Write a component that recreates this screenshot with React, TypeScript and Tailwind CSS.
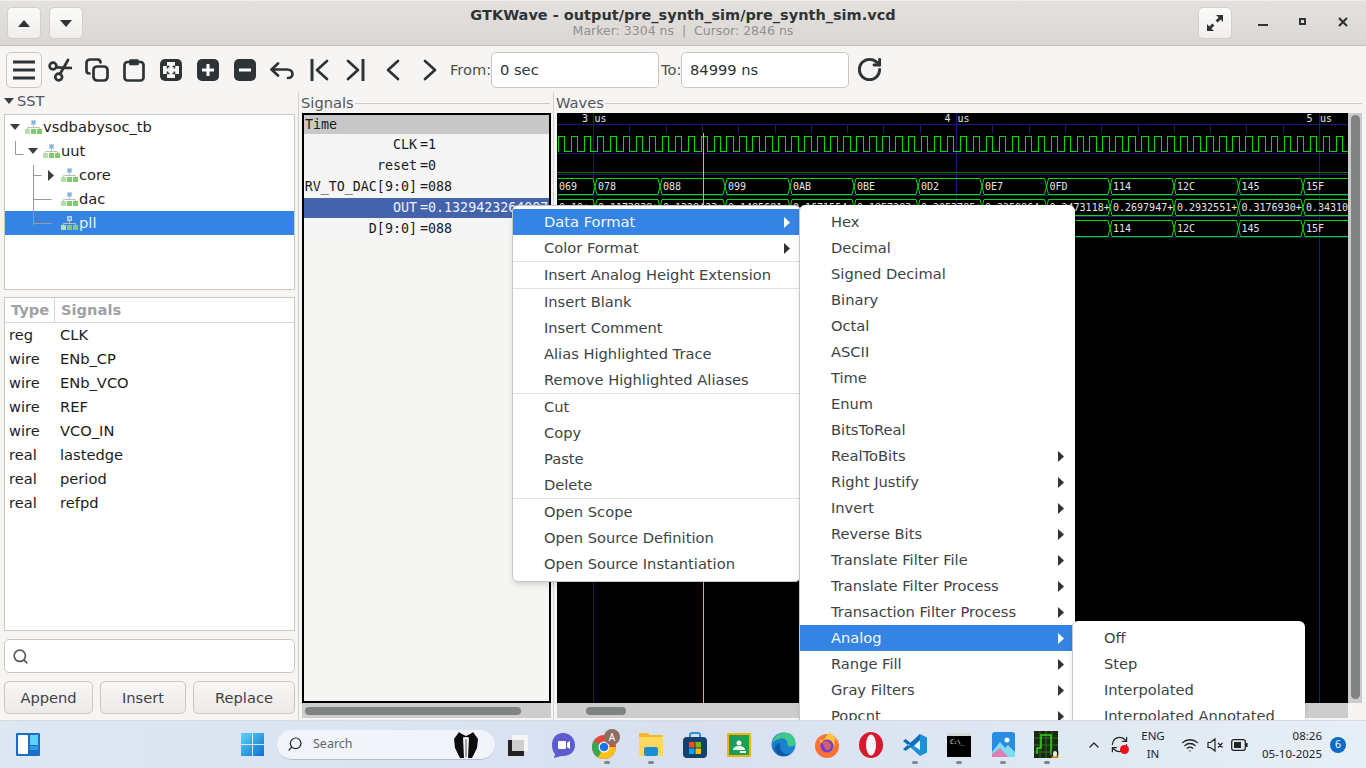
import React from "react";
import { Search, RotateCw, ChevronUp, Wifi, RefreshCw } from "lucide-react";

const ink = "#2e3436";

function Ico({ children, w = 24, h = 24, vb = "0 0 24 24" }: { children: React.ReactNode; w?: number; h?: number; vb?: string }) {
  return (
    <svg width={w} height={h} viewBox={vb} fill="none" stroke={ink} strokeWidth={2.7} strokeLinecap="round" strokeLinejoin="round">
      {children}
    </svg>
  );
}

function Hier() {
  return (
    <svg width="17" height="14" viewBox="0 0 17 14" className="shrink-0">
      <rect x="6" y="0" width="5" height="5" fill="#bcd3f0" />
      <rect x="7" y="1" width="3" height="3" fill="#86b0e2" />
      <path d="M8.5 5v3M2.5 9V7.500h12V9" stroke="#bdbdbd" fill="none" />
      <rect x="0" y="9" width="5" height="5" fill="#b5dfab" />
      <rect x="6" y="9" width="5" height="5" fill="#80cb72" />
      <rect x="12" y="9" width="5" height="5" fill="#80cb72" />
    </svg>
  );
}

function TriDown({ c = "#3a3f41", s = 5 }: { c?: string; s?: number }) {
  return <svg width={s * 2} height={s + 1} viewBox="0 0 10 6"><path d="M0 0h10L5 6z" fill={c} /></svg>;
}
function TriRight({ c = ink }: { c?: string }) {
  return <svg width="6" height="11" viewBox="0 0 6 11"><path d="M0 0l6 5.500L0 11z" fill={c} /></svg>;
}

function ToolBtn({ children }: { children: React.ReactNode }) {
  return <div className="w-[37px] h-[36px] flex items-center justify-center shrink-0">{children}</div>;
}

function Toolbar() {
  return (
    <div className="h-[46px] pt-[1px] bg-[#f6f5f4] flex items-center pl-[6px] text-[14.67px]">
      <div className="w-[36px] h-[36px] rounded-[5px] border border-[#cdc7c2] bg-[#f8f7f6] flex items-center justify-center shrink-0 -mr-[1px]">
        <svg width="24" height="20" viewBox="0 0 24 20" stroke={ink} strokeWidth={3}><path d="M1 2h22M1 10h22M1 18h22" /></svg>
      </div>
      <ToolBtn>
        <Ico><circle cx="5" cy="8" r="3.400" /><circle cx="10.700" cy="19" r="3.400" /><path d="M8.300 9.300l15 .7M12 16l8-14" /></Ico>
      </ToolBtn>
      <ToolBtn>
        <Ico><rect x="8.500" y="8.500" width="14" height="14" rx="3.500" /><path d="M4.500 15.500C2.500 15.500 1.500 14 1.500 12.500V5C1.500 3 3 1.500 5 1.500h7.500c1.500 0 3 1 3 3" /></Ico>
      </ToolBtn>
      <ToolBtn>
        <Ico><rect x="2.500" y="4" width="19" height="18.500" rx="3" /><path d="M8.500 2.500h7V6h-7z" fill={ink} /></Ico>
      </ToolBtn>
      <ToolBtn>
        <svg width="22" height="22" viewBox="0 0 22 22">
          <rect width="22" height="22" rx="5" fill={ink} />
          <path d="M7 3h8v4h4v8h-4v4H7v-4H3V7h4z" fill="#f6f5f4" />
          <path d="M7.500 9.500v-2h2M12.500 7.500h2v2M14.500 12.500v2h-2M9.500 14.500h-2v-2" stroke={ink} strokeWidth="1.500" fill="none" />
        </svg>
      </ToolBtn>
      <ToolBtn>
        <svg width="22" height="22" viewBox="0 0 22 22"><rect width="22" height="22" rx="5" fill={ink} /><path d="M11 5v12M5 11h12" stroke="#fff" strokeWidth={3} /></svg>
      </ToolBtn>
      <ToolBtn>
        <svg width="22" height="22" viewBox="0 0 22 22"><rect width="22" height="22" rx="5" fill={ink} /><path d="M5 11h12" stroke="#fff" strokeWidth={3} /></svg>
      </ToolBtn>
      <ToolBtn>
        <Ico><path d="M8 5.500L1.500 11.500 8 17.500M1.500 11.500H17c3.500 0 5.500 2 5.500 4.500s-2 4-4.500 4" /></Ico>
      </ToolBtn>
      <ToolBtn>
        <Ico><path d="M5 1v22" strokeLinecap="butt" strokeWidth={3} /><path d="M20 3L10 12l10 9" /></Ico>
      </ToolBtn>
      <ToolBtn>
        <Ico><path d="M19 1v22" strokeLinecap="butt" strokeWidth={3} /><path d="M4 3l10 9-10 9" /></Ico>
      </ToolBtn>
      <ToolBtn>
        <Ico><path d="M17 3l-10 9 10 9" /></Ico>
      </ToolBtn>
      <ToolBtn>
        <Ico><path d="M7 3l10 9-10 9" /></Ico>
      </ToolBtn>
      <span className="ml-[2px] text-[#4a4f50] w-[41px] shrink-0">From:</span>
      <div className="w-[168px] h-[36px] rounded-[5px] border border-[#cdc7c2] bg-white flex items-center pl-[8px] text-[#2e3436] shrink-0">0 sec</div>
      <span className="ml-[2px] text-[#4a4f50] w-[20px] shrink-0">To:</span>
      <div className="w-[168px] h-[36px] rounded-[5px] border border-[#cdc7c2] bg-white flex items-center pl-[8px] text-[#2e3436] shrink-0">84999 ns</div>
      <div className="ml-[7px]"><RotateCw size={27} color={ink} strokeWidth={2.6} /></div>
    </div>
  );
}

function TitleBar() {
  const btn = "w-[34px] h-[32px] rounded-[5px] border border-[#d3cfca] bg-gradient-to-b from-[#fafaf9] to-[#f1efed] flex items-center justify-center shrink-0";
  return (
    <div className="h-[46px] shrink-0 grid grid-cols-[1fr_auto_1fr] items-center bg-gradient-to-b from-[#e3e0dd] to-[#dbd8d4] border-b border-[#c3bfba] border-t border-t-[#f2f0ee]">
      <div className="flex items-center pl-[7px] gap-[8px]">
        <div className={btn}><svg width="12" height="7" viewBox="0 0 12 7"><path d="M6 0l6 7H0z" fill={ink} /></svg></div>
        <div className={btn}><svg width="12" height="7" viewBox="0 0 12 7"><path d="M0 0h12L6 7z" fill={ink} /></svg></div>
      </div>
      <div className="flex flex-col items-center leading-[16px]">
        <span className="font-bold text-[14.5px] text-[#2e3436]">GTKWave - output/pre_synth_sim/pre_synth_sim.vcd</span>
        <span className="text-[12.5px] text-[#8f9192] whitespace-pre">Marker: 3304 ns  |  Cursor: 2846 ns</span>
      </div>
      <div className="flex items-center justify-end">
        <div className={`${btn} mr-[26px]`}>
          <svg width="18" height="18" viewBox="0 0 18 18" fill={ink}>
            <path d="M10 1h7v7l-2.400-2.400-3 3-2-2 3-3zM1 10l2.400 2.400 3-3 2 2-3 3L8 17H1z" />
          </svg>
        </div>
        <div className="w-[10px] h-[2.5px] bg-[#2e3436] mt-[4px] mr-[31px]" />
        <div className="w-[7px] h-[7px] border-2 border-[#2e3436] -mt-[3px] mr-[32px]" />
        <svg width="10" height="10" viewBox="0 0 10 10" className="mr-[18px] -mt-[3px]"><path d="M1 1l8 8M9 1l-8 8" stroke={ink} strokeWidth={2.2} /></svg>
      </div>
    </div>
  );
}

function TreeRow({ pad, name, sel, tri }: { pad: number; name: string; sel?: boolean; tri?: "down" | "right" }) {
  return (
    <div className={`h-[24px] flex items-center ${sel ? "bg-[#3584e4] text-[#e8f0fb]" : "text-[#1c1c1c]"}`} style={{ paddingLeft: pad }}>
      <span className="w-[20px] shrink-0 flex justify-center">
        {tri === "down" && <TriDown />}
        {tri === "right" && <TriRight c="#3a3f41" />}
      </span>
      <Hier />
      <span className="ml-[1px]">{name}</span>
    </div>
  );
}

function LeftPane() {
  const sigs: [string, string][] = [["reg", "CLK"], ["wire", "ENb_CP"], ["wire", "ENb_VCO"], ["wire", "REF"], ["wire", "VCO_IN"], ["real", "lastedge"], ["real", "period"], ["real", "refpd"]];
  return (
    <div className="w-[298px] shrink-0 pl-[4px] pr-[3px] flex flex-col text-[14.67px]">
      <div className="h-[22px] flex items-center pb-[4px] text-[#50565a]">
        <TriDown c="#3a3f41" />
        <span className="ml-[3px]">SST</span>
      </div>
      <div className="h-[176px] border border-[#cdc7c2] bg-white relative shrink-0">
        <svg className="absolute left-0 top-0" width="60" height="120" stroke="#9a9a9a" fill="none">
          <path d="M10.500 26v13.500h8M28.500 50v60M28.500 60.500h8M28.500 84.500h18M28.500 108.500h18" />
        </svg>
        <TreeRow pad={0} name="vsdbabysoc_tb" tri="down" />
        <TreeRow pad={18} name="uut" tri="down" />
        <TreeRow pad={36} name="core" tri="right" />
        <TreeRow pad={36} name="dac" />
        <TreeRow pad={36} name="pll" sel />
      </div>
      <div className="mt-[7px] h-[334px] border border-[#cdc7c2] bg-white shrink-0">
        <div className="h-[25px] flex items-center font-bold text-[#a0a2a3] border-b border-[#d9d7d4]">
          <span className="w-[50px] pl-[6px] border-r border-[#d9d7d4] h-full flex items-center">Type</span>
          <span className="pl-[6px]">Signals</span>
        </div>
        {sigs.map(([t, n]) => (
          <div key={n} className="h-[24px] flex items-center text-[#1c1c1c]">
            <span className="w-[55px] pl-[4px]">{t}</span>
            <span>{n}</span>
          </div>
        ))}
      </div>
      <div className="mt-[8px] h-[34px] rounded-[5px] border border-[#cdc7c2] bg-white flex items-center pl-[7px] shrink-0">
        <Search size={17} color="#555b5d" strokeWidth={2.4} />
      </div>
      <div className="mt-[8px] h-[33px] flex gap-[7px] text-[#3d4345] shrink-0">
        <div className="w-[89px] rounded-[5px] border border-[#cdc7c2] bg-gradient-to-b from-[#f8f7f6] to-[#ece9e6] flex items-center justify-center">Append</div>
        <div className="w-[86px] rounded-[5px] border border-[#cdc7c2] bg-gradient-to-b from-[#f8f7f6] to-[#ece9e6] flex items-center justify-center">Insert</div>
        <div className="flex-1 rounded-[5px] border border-[#cdc7c2] bg-gradient-to-b from-[#f8f7f6] to-[#ece9e6] flex items-center justify-center">Replace</div>
      </div>
    </div>
  );
}

function SigRow({ name, val, sel }: { name: string; val: string; sel?: boolean }) {
  return (
    <div className={`h-[20px] mb-[1px] shrink-0 flex items-center whitespace-pre overflow-hidden ${sel ? "bg-[#4463ac] text-[#eef1f8]" : "bg-[#f5f5f5] text-[#1a1a1a]"}`}>
      <span className="w-[113px] text-right shrink-0">{name}</span>
      <span className="ml-[3px]">{val}</span>
    </div>
  );
}

function SignalsPane() {
  return (
    <div className="w-[255px] shrink-0 flex flex-col border-l border-[#d5d2ce]">
      <div className="h-[21px] flex items-center pl-[2px] text-[14.67px] text-[#50565a]">
        <span>Signals</span>
        <div className="flex-1 h-[1px] bg-[#cdc9c5] ml-[1px] mr-[3px] mt-[2px]" />
      </div>
      <div className="ml-[3px] w-[249px] h-[590px] border-2 border-black bg-[#f5f5f4] flex flex-col font-['DejaVu_Sans_Mono',monospace] text-[13.33px] shrink-0 overflow-hidden">
        <div className="h-[19px] mb-[1px] pt-[1px] bg-[#c8c8c8] text-[#1a1a1a] flex items-center pl-[1px] shrink-0">Time</div>
        <SigRow name="CLK" val="=1" />
        <SigRow name="reset" val="=0" />
        <SigRow name="RV_TO_DAC[9:0]" val="=088" />
        <SigRow name="OUT" val="=0.1329423264007" sel />
        <SigRow name="D[9:0]" val="=088" />
      </div>
      <div className="ml-[3px] w-[249px] h-[15px] bg-[#cdcdcd] flex items-center pl-[3px]">
        <div className="w-[216px] h-[8px] rounded-full bg-[#7f8382]" />
      </div>
    </div>
  );
}

function WaveSvg() {
  const P = 363 / 28;
  let clk = "M558 151.500";
  for (let x = 558.4; x < 1348; x += P) {
    clk += `V136.500H${(x + P / 2).toFixed(1)}V151.500H${(x + P).toFixed(1)}`;
  }
  const ticks: number[] = [];
  for (let k = 0; k < 22; k++) ticks.push(593 + 36.3 * k);
  const xs = [559, 595, 660, 725, 790, 854, 918, 982, 1046.5, 1110, 1174, 1238.5, 1303, 1352];
  const hex = ["069", "078", "088", "099", "0AB", "0BE", "0D2", "0E7", "0FD", "114", "12C", "145", "15F"];
  const out = ["0.10+", "0.1173838+", "0.1328423+", "0.1485681+", "0.1671554+", "0.1857283+", "0.2053785+", "0.2250864+", "0.2473118+", "0.2697947+", "0.2932551+", "0.3176930+", "0.34310"];
  const green = "#00dd00";
  const blue = "#1c1c72";
  const bus = (top: number, bot: number, labels: string[], base: number, minText: number) =>
    labels.map((t, i) => {
      const a = xs[i];
      const b = xs[i + 1];
      const mid = (top + bot) / 2;
      const d = i === 0
        ? `M${a - 1} ${top}H${b - 2}L${b} ${mid}L${b - 2} ${bot}H${a - 1}`
        : `M${a} ${mid}L${a + 2} ${top}H${b - 2}L${b} ${mid}L${b - 2} ${bot}H${a + 2}Z`;
      return (
        <g key={t + base + i}>
          <path d={d} fill="none" stroke={green} strokeWidth={1} />
          {a >= minText && (
            <text x={i === 0 ? a : a + 3} y={base} fontSize="10" fill="#e4e4e4" fontFamily="'DejaVu Sans Mono', monospace">{t}</text>
          )}
        </g>
      );
    });
  return (
    <svg width="791" height="590" viewBox="557 113 791 590" className="block bg-black shrink-0" shapeRendering="crispEdges">
      {[593.5, 956.5, 1319.5].map((x) => <path key={x} d={`M${x} 113V703`} stroke={blue} />)}
      <path d="M557 124.500H1348M557 153.500H1348M557 174.500H1348M557 195.500H1348M557 216.500H1348M557 237.500H1348" stroke={blue} />
      {ticks.map((x) => <path key={x} d={`M${Math.round(x) + 0.5} 124V133`} stroke={blue} />)}
      <path d="M557 172.500H1348" stroke="#007a00" />
      <path d={clk} fill="none" stroke={green} />
      <g shapeRendering="geometricPrecision">
        {bus(178.5, 194.5, hex, 190, 0)}
        {bus(199.5, 215.5, out, 211, 0)}
        {bus(220.5, 236.5, hex, 232, 1076)}
      </g>
      <path d="M703.500 133V703" stroke="#ff9a9a" />
      <g fontSize="10" fill="#e4e4e4" fontFamily="'DejaVu Sans Mono', monospace" shapeRendering="geometricPrecision">
        <text x="582" y="122">3</text><text x="594.5" y="122">us</text>
        <text x="944.5" y="122">4</text><text x="957.5" y="122">us</text>
        <text x="1306.5" y="122">5</text><text x="1320" y="122">us</text>
      </g>
    </svg>
  );
}

function WavesPane() {
  return (
    <div className="flex-1 flex flex-col border-l border-[#d5d2ce]">
      <div className="h-[21px] flex items-center pl-[2px] text-[14.67px] text-[#50565a] pr-[4px]">
        <span>Waves</span>
        <div className="flex-1 h-[1px] bg-[#cdc9c5] ml-[1px] mt-[2px]" />
      </div>
      <div className="flex ml-[3px]">
        <WaveSvg />
        <div className="w-[14px] h-[590px] bg-[#cbcbcb] pt-[2px] pl-[3px]">
          <div className="w-[9px] h-[584px] rounded-full bg-[#7f8382]" />
        </div>
      </div>
      <div className="flex ml-[3px] h-[15px]">
        <div className="w-[791px] bg-[#cdcdcd] flex items-center pl-[29px]">
          <div className="w-[40px] h-[8px] rounded-full bg-[#7f8382]" />
        </div>
      </div>
    </div>
  );
}

function MenuItem({ label, active, arrow, am = 10 }: { label: string; active?: boolean; arrow?: boolean; am?: number }) {
  return (
    <div className={`h-[26px] pl-[31px] flex items-center justify-between whitespace-nowrap ${active ? "bg-[#3584e4] text-[#f2f7fd]" : "text-[#3d4345]"}`}>
      <span>{label}</span>
      {arrow && <span style={{ marginRight: am }}><TriRight c={active ? "#ffffff" : "#2e3436"} /></span>}
    </div>
  );
}
function Sep() {
  return <div className="h-[1px] bg-[#e2e1df]" />;
}

function Menus() {
  const sub2: [string, boolean][] = [["Hex", false], ["Decimal", false], ["Signed Decimal", false], ["Binary", false], ["Octal", false], ["ASCII", false], ["Time", false], ["Enum", false], ["BitsToReal", false], ["RealToBits", true], ["Right Justify", true], ["Invert", true], ["Reverse Bits", true], ["Translate Filter File", true], ["Translate Filter Process", true], ["Transaction Filter Process", true], ["Analog", true], ["Range Fill", true], ["Gray Filters", true], ["Popcnt", true]];
  return (
    <>
      <div className="absolute left-[512px] top-[205px] w-[289px] h-[377px] bg-white rounded-[6px] border border-[#c9c7c4] shadow-md py-[3px] text-[14.67px] z-10 overflow-hidden">
        <MenuItem label="Data Format" active arrow />
        <MenuItem label="Color Format" arrow />
        <Sep />
        <MenuItem label="Insert Analog Height Extension" />
        <Sep />
        <MenuItem label="Insert Blank" />
        <MenuItem label="Insert Comment" />
        <MenuItem label="Alias Highlighted Trace" />
        <MenuItem label="Remove Highlighted Aliases" />
        <Sep />
        <MenuItem label="Cut" />
        <MenuItem label="Copy" />
        <MenuItem label="Paste" />
        <MenuItem label="Delete" />
        <Sep />
        <MenuItem label="Open Scope" />
        <MenuItem label="Open Source Definition" />
        <MenuItem label="Open Source Instantiation" />
      </div>
      <div className="absolute left-[799px] top-[205px] w-[276px] h-[560px] bg-white rounded-t-[6px] border-l border-[#c9c7c4] pt-[4px] text-[14.67px] z-20 shadow-md">
        {sub2.map(([l, a]) => <MenuItem key={l} label={l} arrow={a} am={11} active={l === "Analog"} />)}
      </div>
      <div className="absolute left-[1072px] top-[621px] w-[233px] h-[140px] bg-white rounded-t-[6px] border-l border-[#c9c7c4] pt-[4px] text-[14.67px] z-30 shadow-md">
        {["Off", "Step", "Interpolated", "Interpolated Annotated"].map((l) => <MenuItem key={l} label={l} />)}
      </div>
    </>
  );
}

function Cell({ children, dot }: { children: React.ReactNode; dot?: boolean }) {
  return (
    <div className="w-[44px] h-[48px] shrink-0 relative flex items-center justify-center">
      {children}
      {dot && <span className="absolute bottom-[5px] left-1/2 -translate-x-1/2 w-[6px] h-[3px] rounded-full bg-[#7f8790]" />}
    </div>
  );
}

function Taskbar() {
  return (
    <div className="h-[48px] shrink-0 relative z-40 flex items-center bg-gradient-to-r from-[#dde8f3] via-[#d8e0f0] to-[#e6eff5] border-t border-[#d5dbe4] font-['Noto_Sans',sans-serif] text-[#1f2328]">
      <svg width="24" height="23" viewBox="0 0 24 23" className="ml-[16px] shrink-0">
        <rect width="24" height="23" rx="1" fill="#1a6fc4" />
        <rect x="2" y="2" width="10" height="19" rx="1" fill="#fff" />
        <rect x="14" y="2" width="8" height="10" fill="#5fd0fa" />
        <rect x="14" y="13" width="8" height="4" fill="#2f9be8" />
      </svg>
      <div className="w-[190px] shrink-0" />
      <Cell>
        <svg width="23" height="23" viewBox="0 0 23 23">
          <defs><linearGradient id="w" x1="0" y1="0" x2="1" y2="1"><stop offset="0" stopColor="#5fd3fb" /><stop offset="1" stopColor="#0a6fd0" /></linearGradient></defs>
          <path d="M0 0h11v11H0zM12 0h11v11H12zM0 12h11v11H0zM12 12h11v11H12z" fill="url(#w)" />
        </svg>
      </Cell>
      <div className="ml-[3px] w-[218px] h-[30px] rounded-full bg-[#f1f4fb] border-b border-[#b7bdcc] shrink-0 flex items-center relative">
        <Search size={16} color="#22262b" strokeWidth={1.8} className="ml-[10px] -scale-x-100" />
        <span className="ml-[10px] text-[12.5px] text-[#5f656d]">Search</span>
        <svg width="26" height="30" viewBox="0 0 26 30" className="absolute left-[176px] top-0">
          <path d="M6 2L1 9l1 9 5 10h12l5-10 1-9-5-7-4 4h-6z" fill="#0d0d0d" />
          <path d="M10 7h6l-1 21h-4z" fill="#f4f4f4" />
          <path d="M7 3l6 3 6-3v5l-6-1-6 1z" fill="#0d0d0d" />
          <path d="M13 9v18" stroke="#555" />
        </svg>
      </div>
      <div className="w-[1px] shrink-0" />
      <Cell>
        <svg width="24" height="24" viewBox="0 0 24 24">
          <rect x="6" y="2" width="16" height="16" rx="1" fill="#f5f5f5" />
          <rect x="2" y="7" width="16" height="16" fill="#222" />
          <rect x="6" y="7" width="12" height="11" fill="#cfcfcf" />
        </svg>
      </Cell>
      <div className="w-[1px] shrink-0" />
      <Cell>
        <svg width="25" height="26" viewBox="0 0 25 26">
          <path d="M12 1c7 0 12 5 12 12s-5 11-12 11c-2 0-3 0-5 1l-4 1 1-4C2 20 1 17 1 13 1 6 5 1 12 1z" fill="#5d5bd0" />
          <rect x="7" y="9" width="8" height="8" rx="1" fill="#fff" />
          <path d="M16 11l3-2v8l-3-2z" fill="#fff" />
        </svg>
      </Cell>
      <Cell dot>
        <svg width="30" height="32" viewBox="0 0 30 32">
          <circle cx="12" cy="18" r="12" fill="#e8453c" />
          <path d="M12 18L1.600 12A12 12 0 0 0 6 28.400z" fill="#34a853" />
          <path d="M12 18l-6 10.400A12 12 0 0 0 24 18z" fill="#fbc116" />
          <circle cx="12" cy="18" r="5.500" fill="#fff" />
          <circle cx="12" cy="18" r="4.300" fill="#1a73e8" />
          <circle cx="20" cy="8" r="8" fill="#8d6e63" />
          <text x="20" y="11.500" fontSize="10" fill="#fff" textAnchor="middle" fontFamily="'Noto Sans', sans-serif">A</text>
        </svg>
      </Cell>
      <Cell dot>
        <svg width="24" height="25" viewBox="0 0 24 25">
          <path d="M0 1h9l2 2h13v21H0z" fill="#f2b92c" />
          <path d="M0 5h24v19H0z" fill="#ffd862" />
          <rect x="5" y="15" width="14" height="9" rx="2" fill="#1a8fd6" />
        </svg>
      </Cell>
      <Cell>
        <svg width="24" height="26" viewBox="0 0 24 26">
          <path d="M7 6V3c0-1 1-2 2-2h6c1 0 2 1 2 2v3" stroke="#2f8fd8" strokeWidth="2" fill="none" />
          <rect y="5" width="24" height="21" rx="4" fill="#12416e" />
          <rect x="6" y="10" width="5.500" height="5.500" fill="#f25022" />
          <rect x="12.500" y="10" width="5.500" height="5.500" fill="#7fba00" />
          <rect x="6" y="16.500" width="5.500" height="5.500" fill="#00a4ef" />
          <rect x="12.500" y="16.500" width="5.500" height="5.500" fill="#ffb900" />
        </svg>
      </Cell>
      <Cell>
        <svg width="24" height="24" viewBox="0 0 24 24">
          <rect width="24" height="24" rx="1" fill="#f3b500" />
          <rect x="2" y="2" width="20" height="20" fill="#1f9d55" />
          <circle cx="12" cy="10" r="2.500" fill="#e8f5e9" />
          <path d="M6 17c0-3 3-4 6-4s6 1 6 4z" fill="#e8f5e9" />
          <rect x="13" y="18" width="6" height="2" fill="#fff" />
        </svg>
      </Cell>
      <Cell>
        <svg width="25" height="25" viewBox="0 0 25 25">
          <circle cx="12.500" cy="12.500" r="12" fill="#1a80d0" />
          <path d="M1 11C3 3 10 .5 14 .5c6 0 10 4 10.500 10 .2 3-3 4.500-6 4-2-.4-2-2-2-3 0-3-3-6-7-5-3 .8-6 2-8.500 4.500z" fill="#3ec98b" />
          <path d="M9 14c0 5 4 9 10 8-4 3-12 3-15-3-1.500-4 1-7 5-8 0 0 0 1 0 3z" fill="#0c59a4" />
        </svg>
      </Cell>
      <Cell>
        <svg width="26" height="27" viewBox="0 0 26 27">
          <circle cx="13" cy="15" r="12" fill="#f9713a" />
          <path d="M5 6c0 4 3 3 5 3 1-3 3-5 6-8 1 3 7 5 8 13 0-2-2-5-4-6 3 8-3 14-9 13 6 0 7-6 4-9-3 3-8 1-9-1 0-2-1-3-1-5z" fill="#ffc53d" />
          <circle cx="13" cy="15" r="6.500" fill="#6e3bd6" />
          <path d="M8 11c3-2 8-1 9 3s-3 6-5 5" fill="#f9713a" opacity=".7" />
        </svg>
      </Cell>
      <Cell>
        <svg width="24" height="26" viewBox="0 0 24 26">
          <ellipse cx="12" cy="13" rx="12" ry="13" fill="#d8182d" />
          <ellipse cx="12" cy="13" rx="5" ry="10.500" fill="#f2f5fa" />
        </svg>
      </Cell>
      <Cell dot>
        <svg width="24" height="24" viewBox="0 0 24 24">
          <path d="M17 1l7 3.500v15L17 23 6 13z" fill="#1d8fd8" />
          <path d="M17 7v10l-6-4z" fill="#f0f4fa" />
          <path d="M0 8l2.500-2 6 4.500-2.500 2.500zM0 16l2.500 2 6-4.500L6 11z" fill="#0b6db8" />
          <path d="M17 1L6 11l3 2.500L17 7z" fill="#0f6fbd" />
        </svg>
      </Cell>
      <Cell dot>
        <div className="w-[24px] h-[24px] bg-black border-t-[3px] border-[#d8d8d8] flex items-start pl-[3px] pt-[2px] text-[6px] leading-[8px] text-white font-['DejaVu_Sans_Mono',monospace]">C:\_</div>
      </Cell>
      <Cell dot>
        <svg width="23" height="25" viewBox="0 0 23 25">
          <rect width="23" height="25" rx="3" fill="#2a8ce0" />
          <path d="M0 20l8-10 5 6 3-3 7 7v5H0z" fill="#7fdcf5" />
          <circle cx="15" cy="8" r="2.500" fill="#fff" />
          <path d="M0 25v-3l8-6 8 9z" fill="#f06ba5" opacity=".85" />
        </svg>
      </Cell>
      <Cell dot>
        <svg width="26" height="27" viewBox="0 0 26 27">
          <rect width="24" height="27" fill="#1a2a10" />
          <path d="M0 7h24M0 14h24M0 21h24M6 0v27M12 0v27M18 0v27" stroke="#2e6a22" />
          <path d="M3 23V17h4V4h10v19h6" stroke="#35d21f" strokeWidth="1.500" fill="none" />
          <ellipse cx="21" cy="22" rx="3.500" ry="5" fill="#222" />
          <ellipse cx="21" cy="23" rx="2" ry="3" fill="#eee" />
          <path d="M18 26h3M21 26h4" stroke="#f5a800" strokeWidth="1.500" />
        </svg>
      </Cell>
      <div className="ml-[17px] w-[16px] flex justify-center shrink-0"><ChevronUp size={18} color="#222" strokeWidth={1.8} /></div>
      <div className="ml-[7px] w-[20px] relative flex justify-center shrink-0">
        <RefreshCw size={19} color="#222" strokeWidth={1.5} />
        <span className="absolute right-[0px] bottom-[0px] w-[9px] h-[9px] rounded-full bg-[#f00f1a]" />
      </div>
      <div className="ml-[7px] w-[34px] flex flex-col items-center text-[11.5px] leading-[18px] shrink-0">
        <span>ENG</span><span>IN</span>
      </div>
      <div className="ml-[10px] w-[20px] flex justify-center shrink-0"><Wifi size={18} color="#222" strokeWidth={1.7} /></div>
      <div className="ml-[6px] w-[18px] flex justify-center shrink-0">
        <svg width="17" height="16" viewBox="0 0 17 16" fill="none" stroke="#222" strokeWidth="1.2">
          <path d="M1 5.500h2.500L8 2v12L3.500 10.500H1zM11 6l4.500 4.500M15.500 6L11 10.500" />
        </svg>
      </div>
      <div className="ml-[6px] w-[18px] flex justify-center shrink-0">
        <svg width="17" height="12" viewBox="0 0 17 12">
          <rect x=".7" y=".7" width="13.600" height="10.600" rx="2" fill="none" stroke="#222" strokeWidth="1.3" />
          <rect x="3" y="3" width="7" height="6" fill="#222" />
          <rect x="15" y="4" width="1.600" height="4" fill="#222" />
        </svg>
      </div>
      <div className="ml-[4px] w-[70px] text-right text-[11.5px] leading-[18px] shrink-0">
        <div>08:26</div>
        <div>05-10-2025</div>
      </div>
      <div className="ml-[8px] w-[16px] h-[16px] rounded-full bg-[#0a6cc8] text-white text-[10.5px] flex items-center justify-center shrink-0">6</div>
    </div>
  );
}

export default function App() {
  return (
    <div className="w-[1366px] h-[768px] overflow-hidden flex flex-col bg-[#f6f5f4] font-['DejaVu_Sans',sans-serif]">
      <div className="h-[720px] shrink-0 relative overflow-hidden flex flex-col">
        <TitleBar />
        <Toolbar />
        <div className="flex-1 flex min-h-0">
          <LeftPane />
          <SignalsPane />
          <WavesPane />
        </div>
        <Menus />
      </div>
      <Taskbar />
    </div>
  );
}
